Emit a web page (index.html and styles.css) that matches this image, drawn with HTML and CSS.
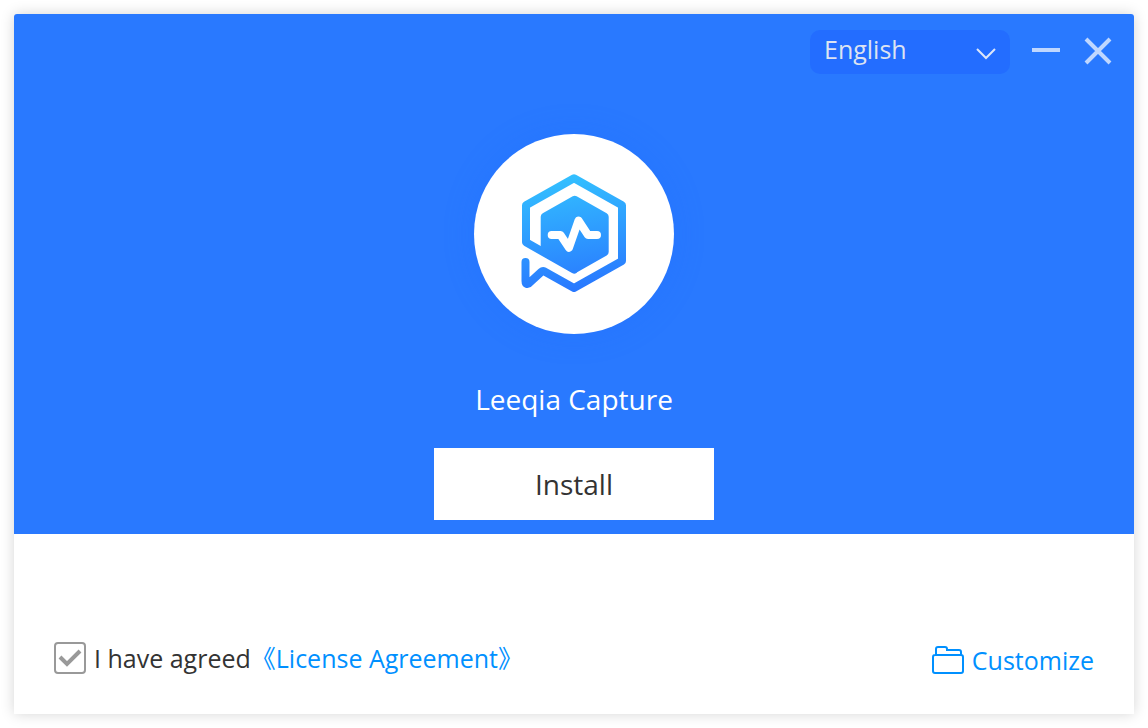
FILE: index.html
```html
<!DOCTYPE html>
<html lang="en">
<head>
<meta charset="utf-8">
<title>Leeqia Capture</title>
<link rel="stylesheet" href="styles.css">
</head>
<body>
<main class="window">
  <section class="hero">
    <header class="titlebar">
      <div class="language">
        <select class="language-select" aria-label="Language">
          <option>English</option>
        </select>
        <svg class="language-arrow" viewBox="0 0 20 12" aria-hidden="true"><path d="M1 1l9 9 9-9"/></svg>
      </div>
      <button class="window-button" type="button" aria-label="Minimize">
        <svg class="minimize-icon" viewBox="0 0 28 28" aria-hidden="true"><path d="M0 12h28"/></svg>
      </button>
      <button class="window-button" type="button" aria-label="Close">
        <svg class="close-icon" viewBox="0 0 28 28" aria-hidden="true"><path d="M2 1l24 24M26 1L2 25"/></svg>
      </button>
    </header>
    <div class="logo">
      <svg class="logo-mark" viewBox="474 134 200 200" aria-hidden="true">
        <defs>
          <linearGradient id="mark" gradientUnits="userSpaceOnUse" x1="566" y1="174" x2="584" y2="288">
            <stop offset="0" stop-color="#33c1ff"/>
            <stop offset="1" stop-color="#2979ff"/>
          </linearGradient>
        </defs>
        <g stroke="url(#mark)" stroke-width="8" stroke-linejoin="round" stroke-linecap="round">
          <path fill="none" d="M574 269.5L526 242.3V205.2L574 178.2L622 205.2V261L574 288L544.5 271.4Q542.7 270.6 541.2 272L530 282.3C528 285 525.5 284.6 525.5 281V262"/>
          <path fill="url(#mark)" d="M574.7 199.7L604.7 216.7V252L574.7 269L544.7 252V216.7Z"/>
        </g>
        <path fill="none" stroke="#fff" stroke-width="8" stroke-linejoin="round" stroke-linecap="round" d="M551.7 235H560.5L569 247.7L578.5 220.5L588 235H597"/>
      </svg>
    </div>
    <h1 class="product">Leeqia Capture</h1>
    <button class="install" type="button">Install</button>
  </section>
  <footer class="options">
    <div class="agreement">
      <span class="check">
        <input class="check-input" type="checkbox" id="agree" checked>
        <svg class="check-mark" viewBox="0 0 32 32" aria-hidden="true"><path d="M6 15l7 7L26 9"/></svg>
      </span>
      <label class="agree-label" for="agree">I have agreed</label>
      <a class="license" href="#license">《License Agreement》</a>
    </div>
    <a class="customize" href="#customize">
      <svg class="folder" viewBox="0 0 32 28" aria-hidden="true"><path d="M1 11q0-2 2-2h26q2 0 2 2v14q0 2-2 2H3q-2 0-2-2zM4 9V3q0-2 2-2h7q2 0 2 2v1h12q2 0 2 2v3"/></svg>
      <span>Customize</span>
    </a>
  </footer>
</main>
</body>
</html>
```
FILE: styles.css
```css
* {
  box-sizing: border-box;
}

body {
  margin: 0;
  padding: 14px;
  background: #fff;
  color: #333;
  font-family: "Open Sans", "Noto Sans CJK SC", sans-serif;
  font-size: 25px;
  line-height: 32px;
}

button,
select {
  border: 0;
  font: inherit;
}

svg {
  display: block;
  fill: none;
}

.window {
  display: flex;
  flex-direction: column;
  min-height: calc(100vh - 28px);
  border-radius: 3px 3px 0 0;
  background: #fff;
  box-shadow: 0 0 14px rgba(0, 0, 0, 0.17);
}

.hero {
  display: flex;
  flex-direction: column;
  align-items: center;
  padding: 16px 22px 14px;
  border-radius: 3px 3px 0 0;
  background: #2979ff;
}

.titlebar {
  display: flex;
  align-items: center;
  align-self: stretch;
  justify-content: flex-end;
  gap: 22px;
}

.language {
  position: relative;
}

.language-select {
  display: block;
  width: 200px;
  height: 44px;
  padding: 0 40px 6px 14px;
  border-radius: 10px;
  background: #236dff;
  color: #dce3f2;
  appearance: none;
}

.language-arrow {
  position: absolute;
  top: 18px;
  right: 14px;
  width: 20px;
  height: 12px;
  stroke: #dce6fa;
  stroke-width: 2;
  pointer-events: none;
}

.window-button {
  padding: 0;
  background: none;
}

.window-button + .window-button {
  margin-left: 2px;
}

.minimize-icon,
.close-icon {
  width: 28px;
  height: 28px;
  overflow: visible;
  stroke: #bfd7ff;
  stroke-width: 4;
}

.logo {
  width: 200px;
  margin-top: 60px;
  border-radius: 50%;
  background: #fff;
  box-shadow: 0 0 30px rgba(30, 110, 255, 0.3);
}

.product {
  margin: 44px 0 28px;
  color: #fff;
  font-size: 28px;
  font-weight: 400;
  line-height: 42px;
}

.install {
  width: 280px;
  height: 72px;
  background: #fff;
  color: #333;
  font-size: 28px;
}

.options {
  display: flex;
  flex: 1;
  align-items: flex-end;
  justify-content: space-between;
  padding: 100px 40px 38px;
}

.agreement {
  display: flex;
  align-items: center;
  padding-bottom: 2px;
}

.check {
  display: grid;
  margin-right: 8px;
}

.check-input,
.check-mark {
  grid-area: 1 / 1;
  width: 32px;
  height: 32px;
}

.check-input {
  margin: 0;
  border: 2px solid #999;
  border-radius: 4px;
  appearance: none;
}

.check-mark {
  stroke: #999;
  stroke-width: 4;
  pointer-events: none;
  visibility: hidden;
}

.check-input:checked + .check-mark {
  visibility: visible;
}

.license,
.customize {
  color: #0090ff;
  text-decoration: none;
}

.customize {
  display: flex;
  align-items: center;
  gap: 8px;
}

.folder {
  width: 32px;
  height: 28px;
  stroke: #0090ff;
  stroke-width: 2;
}
```
